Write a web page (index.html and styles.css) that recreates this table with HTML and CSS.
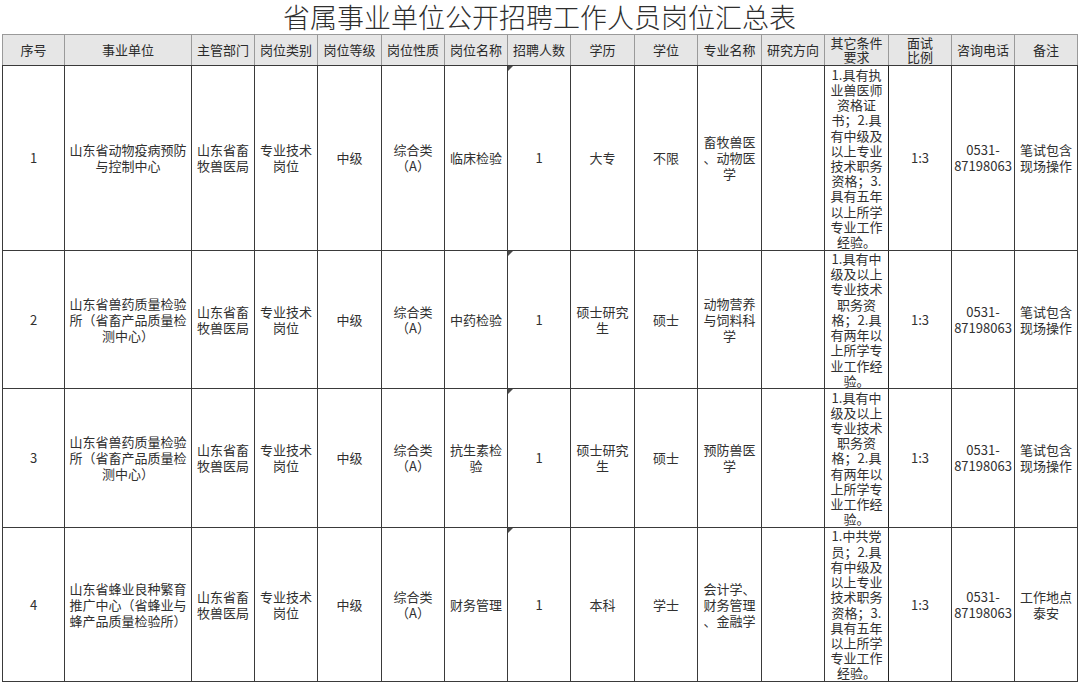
FILE: index.html
```html
<!DOCTYPE html>
<html lang="zh-CN">
<head>
<meta charset="utf-8">
<title>省属事业单位公开招聘工作人员岗位汇总表</title>
<link rel="stylesheet" href="styles.css">
</head>
<body>
<div class="page">
  <h1 class="title">省属事业单位公开招聘工作人员岗位汇总表</h1>
  <table class="sheet">
    <colgroup>
      <col class="w62"><col class="w127"><col class="w63"><col class="w63">
      <col class="w64"><col class="w63"><col class="w63"><col class="w63">
      <col class="w64"><col class="w63"><col class="w64"><col class="w63">
      <col class="w64"><col class="w63"><col class="w63"><col class="w63">
    </colgroup>
    <thead>
      <tr class="hrow">
        <th>序号</th><th>事业单位</th><th>主管部门</th><th>岗位类别</th>
        <th>岗位等级</th><th>岗位性质</th><th>岗位名称</th><th>招聘人数</th>
        <th>学历</th><th>学位</th><th>专业名称</th><th>研究方向</th>
        <th>其它条件<br>要求</th><th>面试<br>比例</th><th>咨询电话</th><th>备注</th>
      </tr>
    </thead>
    <tbody>
      <tr class="r1">
        <td>1</td>
        <td>山东省动物疫病预防<br>与控制中心</td>
        <td>山东省畜<br>牧兽医局</td>
        <td>专业技术<br>岗位</td>
        <td>中级</td>
        <td>综合类<br>（A）</td>
        <td>临床检验</td>
        <td class="mark">1</td>
        <td>大专</td>
        <td>不限</td>
        <td>畜牧兽医<br>、动物医<br>学</td>
        <td></td>
        <td class="req"><div class="req-in">1.具有执<br>业兽医师<br>资格证<br>书；2.具<br>有中级及<br>以上专业<br>技术职务<br>资格；3.<br>具有五年<br>以上所学<br>专业工作<br>经验。</div></td>
        <td>1:3</td>
        <td>0531-<br>87198063</td>
        <td>笔试包含<br>现场操作</td>
      </tr>
      <tr class="r2">
        <td>2</td>
        <td>山东省兽药质量检验<br>所（省畜产品质量检<br>测中心）</td>
        <td>山东省畜<br>牧兽医局</td>
        <td>专业技术<br>岗位</td>
        <td>中级</td>
        <td>综合类<br>（A）</td>
        <td>中药检验</td>
        <td class="mark">1</td>
        <td>硕士研究<br>生</td>
        <td>硕士</td>
        <td>动物营养<br>与饲料科<br>学</td>
        <td></td>
        <td class="req"><div class="req-in">1.具有中<br>级及以上<br>专业技术<br>职务资<br>格；2.具<br>有两年以<br>上所学专<br>业工作经<br>验。</div></td>
        <td>1:3</td>
        <td>0531-<br>87198063</td>
        <td>笔试包含<br>现场操作</td>
      </tr>
      <tr class="r3">
        <td>3</td>
        <td>山东省兽药质量检验<br>所（省畜产品质量检<br>测中心）</td>
        <td>山东省畜<br>牧兽医局</td>
        <td>专业技术<br>岗位</td>
        <td>中级</td>
        <td>综合类<br>（A）</td>
        <td>抗生素检<br>验</td>
        <td class="mark">1</td>
        <td>硕士研究<br>生</td>
        <td>硕士</td>
        <td>预防兽医<br>学</td>
        <td></td>
        <td class="req"><div class="req-in">1.具有中<br>级及以上<br>专业技术<br>职务资<br>格；2.具<br>有两年以<br>上所学专<br>业工作经<br>验。</div></td>
        <td>1:3</td>
        <td>0531-<br>87198063</td>
        <td>笔试包含<br>现场操作</td>
      </tr>
      <tr class="r4">
        <td>4</td>
        <td>山东省蜂业良种繁育<br>推广中心（省蜂业与<br>蜂产品质量检验所）</td>
        <td>山东省畜<br>牧兽医局</td>
        <td>专业技术<br>岗位</td>
        <td>中级</td>
        <td>综合类<br>（A）</td>
        <td>财务管理</td>
        <td class="mark">1</td>
        <td>本科</td>
        <td>学士</td>
        <td>会计学、<br>财务管理<br>、金融学</td>
        <td></td>
        <td class="req"><div class="req-in">1.中共党<br>员；2.具<br>有中级及<br>以上专业<br>技术职务<br>资格；3.<br>具有五年<br>以上所学<br>专业工作<br>经验。</div></td>
        <td>1:3</td>
        <td>0531-<br>87198063</td>
        <td>工作地点<br>泰安</td>
      </tr>
    </tbody>
  </table>
</div>
</body>
</html>
```

FILE: styles.css
```css
body {
  margin: 0;
  background: #ffffff;
  font-family: "Noto Sans CJK SC", "Liberation Sans", sans-serif;
  color: #303030;
}

.page {
  padding-left: 2px;
  width: 1075px;
}

.title {
  margin: 0;
  height: 34px;
  line-height: 34px;
  font-size: 27px;
  font-weight: 300;
  text-align: center;
  color: #2e2e2e;
  overflow: visible;
}

.sheet {
  border-collapse: collapse;
  table-layout: fixed;
  width: 1075px;
  font-size: 13px;
}

.w62 { width: 62px; }
.w63 { width: 63px; }
.w64 { width: 64px; }
.w127 { width: 127px; }

.sheet th,
.sheet td {
  border: 1px solid #3a3a3a;
  padding: 0 1px;
  text-align: center;
  vertical-align: middle;
  white-space: nowrap;
  overflow: hidden;
  font-weight: normal;
  line-height: 16px;
}

.sheet th {
  background: #e6e6e6;
  border-color: #9a9a9a;
  border-bottom-color: #3a3a3a;
  line-height: 14px;
  color: #2a2a2a;
}

.hrow { height: 31px; }
.r1 { height: 185px; }
.r2 { height: 138px; }
.r3 { height: 139px; }
.r4 { height: 154px; }

.sheet td.req {
  padding: 0;
  border-left-color: #222;
  border-right-color: #222;
}

.req-in {
  line-height: 15.2px;
  font-size: 13px;
}

.sheet td.mark {
  position: relative;
}

.sheet td.mark::before {
  content: "";
  position: absolute;
  left: 0;
  top: 0;
  border-top: 5px solid #4a4a4a;
  border-right: 5px solid transparent;
}
```
